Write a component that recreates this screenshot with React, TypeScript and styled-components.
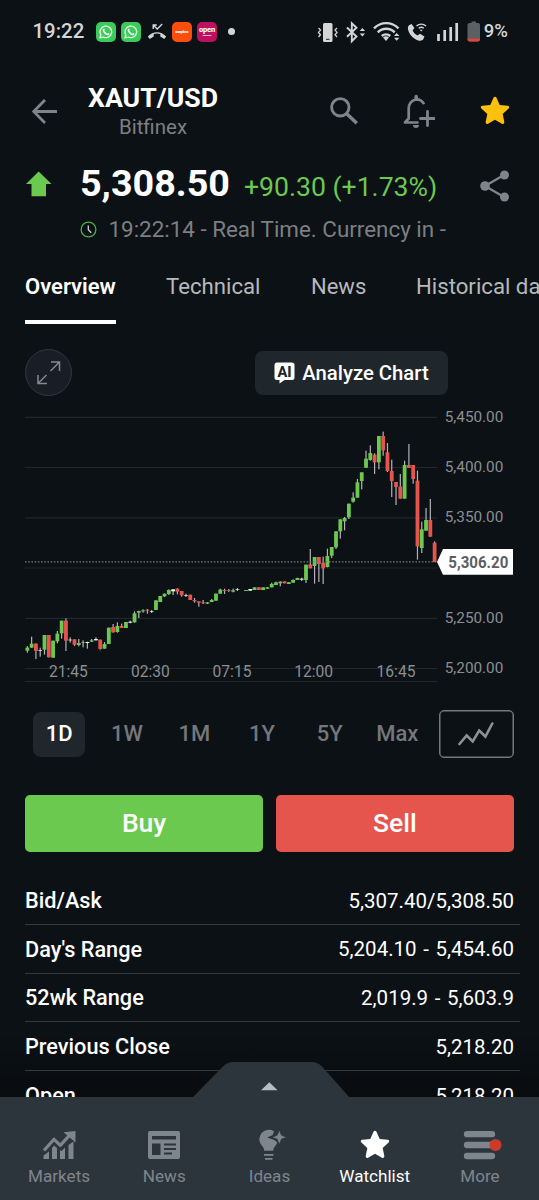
import React from 'react';
import styled, { createGlobalStyle } from 'styled-components';

const c = {
  bg: '#0c1115',
  panel: '#1f262c',
  nav: '#2d353c',
  muted: '#7c7f83',
  icon: '#80848a',
  green: '#6bc94f',
  red: '#e6544e',
  line: '#34393d',
};

const GlobalStyle = createGlobalStyle`
  * { box-sizing: border-box; }
  body { margin: 0; background: ${c.bg}; font-family: Roboto, "Liberation Sans", sans-serif; }
  svg { display: block; flex: none; }
`;

const Screen = styled.div`
  width: 539px;
  height: 1200px;
  display: flex;
  flex-direction: column;
  overflow: hidden;
  background: ${c.bg};
  color: #fff;
  white-space: nowrap;
`;

const Text = styled.span<{ $size: number; $weight?: number; $color?: string; $track?: number }>`
  font-size: ${(p) => p.$size}px;
  font-weight: ${(p) => p.$weight ?? 400};
  color: ${(p) => p.$color ?? '#fff'};
  letter-spacing: ${(p) => p.$track ?? 0}px;
  line-height: 1.2;
`;

/* ---------- status bar ---------- */

const StatusBar = styled.div`
  height: 63px;
  padding: 0 31px 0 32.500px;
  display: flex;
  align-items: center;
  flex: none;
`;

const NoticeIcons = styled.div`
  display: flex;
  align-items: center;
  gap: 5.200px;
  margin-left: 12px;
`;

const AppBadge = styled.div<{ $bg: string }>`
  width: 20px;
  height: 20px;
  border-radius: 5px;
  background: ${(p) => p.$bg};
  display: flex;
  flex-direction: column;
  align-items: center;
  justify-content: center;
`;

const BadgeText = styled.span<{ $size: number; $gap?: number }>`
  font-size: ${(p) => p.$size}px;
  font-weight: 800;
  line-height: 1;
  letter-spacing: -0.2px;
  margin-top: ${(p) => p.$gap ?? 0}px;
`;

const Dot = styled.i`
  width: 7px;
  height: 7px;
  border-radius: 50%;
  background: #d3d5d7;
  margin-left: 6px;
`;

const SystemIcons = styled.div`
  display: flex;
  align-items: center;
  gap: 4px;
  margin-left: auto;
`;

const WhatsApp = () => (
  <AppBadge $bg="#3ccb5a">
    <svg width="14" height="14" viewBox="0 0 14 14" fill="none" stroke="#e9fbe9">
      <path d="M1 13l.9-3.2A5.8 5.8 0 1 1 4.2 12z" strokeWidth="1.3" strokeLinejoin="round" />
      <path d="M4.9 4.3c-.6.6-.4 2 1 3.5s2.900 1.900 3.700 1.200" strokeWidth="1.7" strokeLinecap="round" />
    </svg>
  </AppBadge>
);

const MissedCall = () => (
  <svg width="20" height="20" viewBox="0 0 20 20" fill="none" stroke="#d3d5d7">
    <path d="M6.200 7V3h3.600M6.500 3.300l3.700 3.700 5-5" strokeWidth="1.400" />
    <path d="M.8 14.600c5.200-5.800 13.200-5.800 18.400 0l-1.900 2.300-4-2.400v-2.400a10 10 0 0 0-6.600 0v2.400L2.700 16.900z" fill="#d3d5d7" stroke="none" />
  </svg>
);

const StatusIcons = () => (
  <svg width="164" height="24" viewBox="316 19 164 24" fill="none" stroke="#d3d5d7">
    <rect x="323" y="22" width="9.500" height="19" rx="1.500" fill="#d3d5d7" stroke="none" />
    <path d="M326 38.300h3.500" stroke="#222" strokeWidth="1" />
    <path d="M318.500 27l2 2-2 2.400 2 2.300-2 2.300M337 27l-2 2 2 2.400-2 2.300 2 2.300" strokeWidth="1.300" />
    <path d="M347 26.500l9.500 9-4.700 4.700V22.200l4.700 4.600-9.500 9" strokeWidth="1.900" />
    <path d="M359.700 30l2.700-3 2.700 3zM359.700 32.500l2.700 3 2.700-3z" fill="#d3d5d7" stroke="none" />
    <path d="M374 27.300a17 17 0 0 1 24.500 0M377.800 31.300a12 12 0 0 1 16.900 0M381.800 35a6.500 6.500 0 0 1 8.500 0" strokeWidth="2.400" />
    <path d="M383 36.500a5 5 0 0 1 6 0l-3 3.500z" fill="#d3d5d7" stroke="none" />
    <path d="M394 35l2.700-3 2.700 3zM394 36.800l2.700 3 2.700-3z" fill="#d3d5d7" stroke="none" />
    <path d="M409 24.300l2.600-1.400 2.800 4.200-1.800 2.400c1 2.200 2.700 3.900 4.900 4.900l2.500-1.700 4.500 2.900-1.400 3c-1 1.200-3 1.500-5.500.6-4.500-1.700-8-5.400-9.300-9.700-.7-2.300-.4-4.200.7-5.200z" fill="#d3d5d7" stroke="none" />
    <path d="M416.500 25a7 7 0 0 1 9.500 0M418.700 27.300a4 4 0 0 1 5.100 0" strokeWidth="1.300" />
    <path d="M419.700 28.700h3l-1.500 1.800z" fill="#d3d5d7" stroke="none" />
    <path d="M438.500 40v-7M444.700 40v-11M450.700 40V26M456.700 40V22" strokeWidth="2.700" />
    <path d="M471.500 20.500h4.500v1.500h2a2 2 0 0 1 2 2v14a2.500 2.500 0 0 1-2.500 2.500h-7.500a2.500 2.500 0 0 1-2.500-2.500V24a2 2 0 0 1 2-2h2z" fill="#5d6063" stroke="none" />
    <path d="M467.500 37.700H480v.3a2.500 2.500 0 0 1-2.500 2.500H470a2.500 2.500 0 0 1-2.500-2.500z" fill="#e0443c" stroke="none" />
  </svg>
);

/* ---------- header ---------- */

const Header = styled.header`
  height: 83px;
  padding: 20px 29px 0 32px;
  display: flex;
  align-items: flex-start;
  flex: none;
`;

const BackSlot = styled.div`
  width: 56px;
  padding-top: 15.500px;
`;

const TitleBlock = styled.div`
  width: 130px;
  display: flex;
  flex-direction: column;
  align-items: center;
  & > span:first-child { line-height: 31px; }
  & > span:last-child { line-height: 27px; }
`;

const HeaderActions = styled.div`
  margin-left: auto;
  display: flex;
  align-items: center;
  padding-top: 11px;
  gap: 45px;
`;

/* ---------- quote ---------- */

const Quote = styled.section`
  height: 104px;
  padding: 15px 29px 0 25.500px;
  flex: none;
`;

const QuoteRow = styled.div`
  display: flex;
  align-items: center;
  height: 46px;
`;

const Price = styled(Text)`
  margin-left: 28.500px;
  width: 164px;
`;

const Change = styled(Text)`
  margin-top: 6px;
`;

const ShareSlot = styled.div`
  margin: 4px 0 0 auto;
`;

const TimeRow = styled.div`
  display: flex;
  align-items: center;
  height: 44px;
  gap: 12px;
  padding-left: 54px;
`;

/* ---------- tabs ---------- */

const Tabs = styled.nav`
  height: 74px;
  margin-left: 25px;
  display: flex;
  flex: none;
  overflow: hidden;
`;

const Tab = styled.div<{ $active?: boolean; $w: number }>`
  width: ${(p) => p.$w}px;
  flex: none;
  height: 74px;
  & > span { display: block; line-height: 73px; height: 70px; }
  &::after {
    content: '';
    display: block;
    width: 91px;
    height: 3.700px;
    background: ${(p) => (p.$active ? '#fff' : 'transparent')};
  }
`;

/* ---------- chart ---------- */

const ChartTools = styled.div`
  height: 81px;
  padding: 25px 91px 0 25px;
  display: flex;
  justify-content: space-between;
  align-items: flex-start;
  flex: none;
`;

const RoundButton = styled.div`
  width: 47px;
  height: 47px;
  border-radius: 50%;
  border: 1.500px solid #34383c;
  background: #191d25;
  display: flex;
  align-items: center;
  justify-content: center;
`;

const AnalyzeButton = styled.div`
  width: 193px;
  height: 44px;
  margin-top: 2px;
  border-radius: 8px;
  background: ${c.panel};
  display: flex;
  align-items: center;
  gap: 7px;
  padding-left: 19.300px;
`;

const ChartArea = styled.div`
  height: 289px;
  flex: none;
`;

type Bar = [kind: 'g' | 'r' | 'w', high: number, top: number, bottom: number, low: number];

/* Each session lists its bars in thirds of a pixel, measured from the session's base line. */
const sessions: { base: number; bars: Bar[] }[] = [
  {
    base: 1680,
    bars: [
      ['g', 258, 263, 272, 278], ['g', 230, 251, 263, 264], ['r', 250, 251, 273, 297], ['w', 263, 270, 272, 290],
      ['g', 225, 225, 269, 284], ['r', 225, 225, 292, 292], ['g', 242, 242, 293, 293], ['g', 213, 221, 244, 250],
      ['g', 182, 182, 220, 236], ['r', 175, 182, 242, 273], ['w', 232, 239, 241, 248], ['r', 238, 238, 254, 258],
      ['g', 237, 249, 255, 259], ['w', 241, 248, 249, 262], ['w', 245, 246, 249, 266], ['g', 237, 241, 245, 246],
      ['w', 232, 237, 241, 241], ['r', 239, 239, 267, 269], ['g', 246, 252, 266, 266], ['g', 203, 203, 252, 252],
      ['r', 192, 201, 217, 218], ['g', 187, 198, 216, 218], ['r', 191, 198, 204, 204], ['g', 186, 186, 204, 204],
      ['w', 182, 185, 188, 190], ['g', 154, 160, 187, 188], ['g', 152, 153, 158, 174], ['g', 148, 151, 154, 158],
      ['r', 147, 149, 152, 161], ['w', 150, 153, 155, 159], ['g', 121, 121, 150, 150], ['g', 108, 108, 126, 126],
      ['g', 101, 101, 109, 111], ['g', 88, 90, 102, 105], ['w', 87, 88, 94, 105], ['r', 85, 86, 95, 103],
    ],
  },
  {
    base: 1500,
    bars: [
      ['r', 273, 273, 286, 290], ['w', 281, 285, 287, 291], ['r', 284, 284, 300, 300], ['r', 294, 300, 304, 308],
      ['r', 304, 304, 308, 320], ['r', 300, 307, 310, 312], ['g', 306, 307, 311, 312], ['g', 297, 300, 306, 306],
      ['g', 281, 281, 302, 302], ['g', 266, 269, 281, 281], ['r', 266, 270, 273, 282], ['r', 267, 271, 273, 276],
      ['g', 266, 271, 275, 277], ['w', 264, 268, 270, 273], ['w', 271, 271, 271, 271], ['g', 270, 270, 273, 273],
      ['w', 267, 267, 272, 272], ['g', 262, 262, 270, 270], ['r', 262, 262, 270, 270], ['g', 262, 262, 270, 270],
      ['g', 261, 262, 266, 267], ['g', 248, 252, 262, 262], ['g', 245, 247, 255, 255], ['g', 244, 245, 250, 259],
      ['r', 244, 244, 250, 250], ['g', 246, 247, 252, 252], ['g', 238, 240, 248, 248], ['g', 233, 234, 240, 240],
      ['w', 233, 236, 239, 243], ['g', 194, 194, 240, 249], ['r', 147, 193, 205, 205], ['g', 171, 171, 198, 251],
      ['r', 171, 171, 192, 246], ['r', 170, 188, 205, 252], ['g', 146, 168, 201, 202], ['g', 141, 141, 167, 174],
      ['g', 94, 94, 142, 147], ['g', 58, 58, 94, 116], ['g', 51, 54, 64, 91], ['g', 11, 11, 52, 57],
    ],
  },
  {
    base: 1230,
    bars: [
      ['g', 247, 263, 275, 278], ['g', 207, 217, 263, 263], ['g', 187, 187, 213, 238], ['g', 122, 146, 173, 174],
      ['g', 106, 129, 150, 152], ['r', 130, 134, 157, 192], ['g', 78, 78, 157, 178], ['r', 65, 78, 121, 137],
      ['r', 99, 127, 183, 186], ['r', 149, 183, 213, 261], ['r', 216, 216, 231, 285], ['r', 192, 230, 266, 266],
      ['g', 152, 165, 266, 266], ['r', 102, 165, 174, 174], ['r', 165, 165, 207, 221], ['r', 182, 212, 409, 449],
      ['g', 335, 358, 414, 429], ['g', 294, 330, 362, 362], ['r', 267, 330, 380, 381], ['r', 394, 398, 456, 456],
    ],
  },
];

const bars = sessions.flatMap((s) =>
  s.bars.map(([kind, ...ys]) => ({ kind, ys: ys.map((y) => (y + s.base) / 3) })),
);
const fills = { g: c.green, r: c.red, w: '#f4f4f4' };
const grid = [417.3, 467.5, 517.8, 568, 618.3, 668.5, 681.5];
const priceLabels: [string, number][] = [
  ['5,450.00', 416.500], ['5,400.00', 466.500], ['5,350.00', 516.800], ['5,250.00', 617.500], ['5,200.00', 667.500],
];
const timeLabels: [string, number][] = [['21:45', 68.300], ['02:30', 150.300], ['07:15', 232], ['12:00', 313.700], ['16:45', 396]];

const Chart = () => (
  <svg width="539" height="289" viewBox="0 405 539 289" fontFamily='Roboto, "Liberation Sans", sans-serif'>
    {grid.map((y) => (
      <line key={y} x1="25" x2="437" y1={y} y2={y} stroke="#22272b" strokeWidth="1.200" />
    ))}
    {bars.map(({ kind, ys: [high, top, bottom, low] }, i) => {
      const x = 27.350 + i * 4.287;
      return (
        <g key={i}>
          <rect x={x - 0.600} y={high} width="1.200" height={low - high} fill="#b4b1b9" />
          <rect x={x - 1.900} y={top} width="3.800" height={bottom - top} fill={fills[kind]} />
        </g>
      );
    })}
    <line x1="25" x2="438" y1="561.900" y2="561.900" stroke="#777b7e" strokeWidth="1.200" strokeDasharray="1.600 1.600" />
    <path d="M437 562l6-13h70v25.700h-70z" fill="#fff" />
    <text x="478.300" y="568" fontSize="15.600" fontWeight="700" fill="#5b5f64" textAnchor="middle" textLength="60" lengthAdjust="spacingAndGlyphs">5,306.20</text>
    {priceLabels.map(([t, y]) => (
      <text key={t} x="444.700" y={y + 5.400} fontSize="15.300" fill="#8b8e92">{t}</text>
    ))}
    {timeLabels.map(([t, x]) => (
      <text key={t} x={x} y="676.500" fontSize="15.600" fill="#8b8e92" textAnchor="middle">{t}</text>
    ))}
  </svg>
);

/* ---------- range picker and trade buttons ---------- */

const RangeRow = styled.div`
  height: 79px;
  padding: 16px 25px 0 25px;
  display: flex;
  align-items: flex-start;
  flex: none;
`;

const RangeCell = styled.div`
  width: 67.600px;
  height: 48px;
  display: flex;
  align-items: center;
  justify-content: center;
`;

const RangePill = styled.div<{ $active?: boolean }>`
  width: 52px;
  height: 45px;
  padding: 1px 0 0 1px;
  border-radius: 8px;
  background: ${(p) => (p.$active ? c.panel : 'transparent')};
  display: flex;
  align-items: center;
  justify-content: center;
`;

const ChartTypeButton = styled.div`
  width: 75.500px;
  height: 48px;
  margin-left: auto;
  border: 1.500px solid #74787c;
  border-radius: 5px;
  display: flex;
  align-items: center;
  justify-content: center;
  box-shadow: inset 0 0 0 0.500px #74787c;
`;

const TradeRow = styled.div`
  display: flex;
  gap: 12.500px;
  padding: 22px 25px 0;
  height: 103px;
  flex: none;
`;

const TradeButton = styled.div<{ $bg: string }>`
  flex: 1;
  height: 57px;
  padding-bottom: 1px;
  border-radius: 5px;
  background: ${(p) => p.$bg};
  display: flex;
  align-items: center;
  justify-content: center;
`;

/* ---------- stats ---------- */

const Stats = styled.section`
  flex: 1;
  min-height: 0;
  overflow: hidden;
  padding: 0 19px 0 25px;
  background: linear-gradient(rgba(0, 0, 0, 0) 70%, rgba(0, 0, 0, 0.3));
`;

const StatRow = styled.div`
  height: 48.800px;
  padding: 2px 6px 0 0;
  border-bottom: 1.500px solid ${c.line};
  display: flex;
  align-items: center;
  justify-content: space-between;
  & > span:last-child { word-spacing: 1.500px; }
`;

/* ---------- bottom navigation ---------- */

const BottomNav = styled.nav`
  position: relative;
  height: 103px;
  padding: 0 6.500px;
  display: flex;
  flex: none;
  background: ${c.nav};
`;

const NavHandle = styled.div`
  position: absolute;
  left: 192px;
  top: -35px;
`;

const NavItem = styled.div`
  flex: 1;
  display: flex;
  flex-direction: column;
  align-items: center;
  padding-top: 32.500px;
  gap: 4px;
`;

const iconColor = '#7f858c';

const starPath = 'M15 .8c.7 0 1.200.4 1.500 1l3.200 7.100 8 .9c1.500.2 2 1.700.9 2.800l-5.900 5.500 1.600 8c.2 1.500-1.100 2.500-2.400 1.700L15 23.700l-6.900 4.100c-1.300.8-2.600-.2-2.400-1.700l1.600-8-5.900-5.500C.3 11.500.8 10 2.300 9.800l8-.9 3.200-7.100c.3-.6.8-1 1.500-1z';

const Star = ({ color, size = 30 }: { color: string; size?: number }) => (
  <svg width={size} height={size} viewBox="0 0 30 30"><path d={starPath} fill={color} /></svg>
);

const navItems = [
  {
    label: 'Markets',
    icon: (
      <svg width="34" height="30" viewBox="0 0 34 30" fill={iconColor}>
        <path d="M2 20.500L12 9.300l6.300 6L27 5.800" fill="none" stroke={iconColor} strokeWidth="3.200" strokeLinejoin="round" />
        <path d="M21.500 2.200L33.500 1v11.500z" />
        <path d="M1.500 25.500l5.500-4V29H1.500zM10 18l2-2.500 3 2.500v11h-5zM18 20l1.500 1 3.500-3.500V29h-5zM26.500 15l5-3.500V29h-5z" />
      </svg>
    ),
  },
  {
    label: 'News',
    icon: (
      <svg width="32" height="30" viewBox="0 0 32 30">
        <rect y="1" width="32" height="28" rx="2" fill={iconColor} />
        <path d="M4 6h24v3.500H4zM4 13.500h8.500V25H4zM16 13.500h12v2H16zM16 18h12v2H16zM16 22.500h8v2H16z" fill={c.nav} />
      </svg>
    ),
  },
  {
    label: 'Ideas',
    icon: (
      <svg width="32" height="32" viewBox="0 0 32 32" fill={iconColor}>
        <path d="M20 1.200A9.500 9.500 0 0 0 14.600-.2 9.300 9.300 0 0 0 5.300 9c0 3.400 1.800 5.600 3.300 7.500 1 1.300 1.500 2.500 1.600 4.300h9c.1-1.800.6-3 1.600-4.300 1.200-1.500 2-2.600 2.400-4.200l-3-2.300-7-2.400 5.500-2.500z" />
        <path d="M25.300.5l2 4.800 4.800 1.900-4.800 1.900-2 5-2-5-4.800-1.900 4.800-1.900z" stroke={c.nav} strokeWidth=".4" />
        <path d="M10 24h9.500v1.700H10zM11 28h7.500v1.700H11z" />
      </svg>
    ),
  },
  { label: 'Watchlist', active: true, icon: <Star color="#fff" size={30} /> },
  {
    label: 'More',
    icon: (
      <svg width="43" height="30" viewBox="-5.500 0 43 30">
        <path d="M3.500 4.200h25M3.500 15h25M3.500 26h25" stroke={iconColor} strokeWidth="6.300" strokeLinecap="round" />
        <circle cx="32" cy="15" r="6.100" fill="#cb3a2b" />
      </svg>
    ),
  },
];

const NavIcon = styled.div`
  height: 32px;
  display: flex;
  align-items: flex-start;
  justify-content: center;
  & > svg { overflow: visible; }
`;

const stats: [string, string][] = [
  ['Bid/Ask', '5,307.40/5,308.50'],
  ["Day's Range", '5,204.10 - 5,454.60'],
  ['52wk Range', '2,019.9 - 5,603.9'],
  ['Previous Close', '5,218.20'],
  ['Open', '5,218.20'],
];

export default function App() {
  return (
    <Screen>
      <GlobalStyle />
      <StatusBar>
        <Text $size={20.400} $color="#d3d5d7" $weight={500}>19:22</Text>
        <NoticeIcons>
          <WhatsApp />
          <WhatsApp />
          <MissedCall />
          <AppBadge $bg="#fb4e0c"><BadgeText $size={3.800}>soapbox</BadgeText></AppBadge>
          <AppBadge $bg="#bd1160">
            <BadgeText $size={7.500}>open</BadgeText>
            <BadgeText $size={2.500} $gap={2}>interpark</BadgeText>
          </AppBadge>
          <Dot />
        </NoticeIcons>
        <SystemIcons>
          <StatusIcons />
          <Text $size={18.500} $color="#d3d5d7" $weight={500}>9%</Text>
        </SystemIcons>
      </StatusBar>

      <Header>
        <BackSlot>
          <svg width="25" height="25" viewBox="0 0 25 25" fill="none" stroke={c.icon} strokeWidth="2.800">
            <path d="M25 12.500H2M13 .9L1.600 12.500 13 24" />
          </svg>
        </BackSlot>
        <TitleBlock>
          <Text $size={26.700} $weight={700}>XAUT/USD</Text>
          <Text $size={20.500} $color={c.muted}>Bitfinex</Text>
        </TitleBlock>
        <HeaderActions>
          <svg width="28" height="28" viewBox="0 0 28 28" fill="none" stroke={c.icon}>
            <circle cx="10.300" cy="10.300" r="8.700" strokeWidth="2.900" />
            <path d="M17 17l9.800 9.300" strokeWidth="3.500" />
          </svg>
          <svg width="32" height="34" viewBox="0 0 32 34" fill="none" stroke={c.icon} strokeWidth="2.700">
            <path d="M15.500 28.500H2l3.700-4v-10c0-4.500 3-8.600 7.800-9.200 3.600 0 6 1.700 7.500 4.800" strokeLinejoin="round" />
            <path d="M13.200 2.500v2.500" strokeWidth="3.500" strokeLinecap="round" />
            <path d="M24.500 17.500v14M17.500 24.500h14" strokeWidth="2.800" strokeLinecap="round" />
            <path d="M10 31h6a3 3 0 0 1-6 0z" fill={c.icon} stroke="none" />
          </svg>
          <Star color="#fcc00f" />
        </HeaderActions>
      </Header>

      <Quote>
        <QuoteRow>
          <svg width="26" height="26" viewBox="0 0 26 26" fill={c.green}>
            <path d="M12.700.5L25.500 13h-5.500v12.300H5.500V13H0z" />
          </svg>
          <Price $size={37.700} $weight={700}>5,308.50</Price>
          <Change $size={26.600} $color={c.green}>+90.30 (+1.73%)</Change>
          <ShareSlot>
            <svg width="30" height="32" viewBox="0 0 30 32" fill={c.icon} stroke={c.icon}>
              <path d="M24 5L5 16l19 11" fill="none" strokeWidth="2.300" />
              <circle cx="24.500" cy="5" r="4.500" stroke="none" />
              <circle cx="5" cy="16" r="4.800" stroke="none" />
              <circle cx="24.500" cy="27" r="4.500" stroke="none" />
            </svg>
          </ShareSlot>
        </QuoteRow>
        <TimeRow>
          <svg width="17" height="17" viewBox="0 0 17 17" fill="none">
            <circle cx="8.500" cy="8.500" r="7.400" stroke="#4fae43" strokeWidth="1.300" />
            <path d="M8.300 4.500v4.200l2.900 3" stroke="#d0d2d4" strokeWidth="1.300" />
          </svg>
          <Text $size={22.400} $color={c.muted}>19:22:14 - Real Time. Currency in -</Text>
        </TimeRow>
      </Quote>

      <Tabs>
        <Tab $active $w={141}><Text $size={22} $weight={600}>Overview</Text></Tab>
        <Tab $w={145}><Text $size={22.200} $color="#b7b9bb">Technical</Text></Tab>
        <Tab $w={105}><Text $size={22} $color="#b7b9bb">News</Text></Tab>
        <Tab $w={150}><Text $size={22.200} $color="#b7b9bb">Historical data</Text></Tab>
      </Tabs>

      <ChartTools>
        <RoundButton>
          <svg width="24" height="24" viewBox="0 0 24 24" fill="none" stroke="#85888c" strokeWidth="1.500">
            <path d="M14 1h8.500v9M22 1.500l-8.500 8.500M1 14v8.500h9M1.500 22l8-8" />
          </svg>
        </RoundButton>
        <AnalyzeButton>
          <svg width="21" height="22" viewBox="0 0 21 22">
            <path d="M3 .5h15a2.500 2.500 0 0 1 2.500 2.500v12.500a2.500 2.500 0 0 1-2.500 2.500h-7.500L5.500 21.500V18H3A2.500 2.500 0 0 1 .5 15.500V3A2.500 2.500 0 0 1 3 .5z" fill="#fff" />
            <text x="10.500" y="14.500" textAnchor="middle" fontFamily="Roboto, sans-serif" fontSize="14.500" fontWeight="800" fill={c.panel}>AI</text>
          </svg>
          <Text $size={20.300} $weight={500}>Analyze Chart</Text>
        </AnalyzeButton>
      </ChartTools>
      <ChartArea><Chart /></ChartArea>

      <RangeRow>
        {['1D', '1W', '1M', '1Y', '5Y', 'Max'].map((r, i) => (
          <RangeCell key={r}>
            <RangePill $active={i === 0}>
              <Text $size={22} $weight={500} $color={i === 0 ? '#fff' : '#74777b'}>{r}</Text>
            </RangePill>
          </RangeCell>
        ))}
        <ChartTypeButton>
          <svg width="36" height="24" viewBox="0 0 36 24" fill="none" stroke="#8e9194" strokeWidth="2.600">
            <path d="M1.500 22l7.200-8.500 6 6 6.500-11 6.200 6L34.300 1.500" strokeLinecap="round" />
          </svg>
        </ChartTypeButton>
      </RangeRow>
      <TradeRow>
        <TradeButton $bg={c.green}><Text $size={26.500} $weight={500}>Buy</Text></TradeButton>
        <TradeButton $bg={c.red}><Text $size={26.500} $weight={500}>Sell</Text></TradeButton>
      </TradeRow>

      <Stats>
        {stats.map(([k, v]) => (
          <StatRow key={k}>
            <Text $size={21.700} $weight={500}>{k}</Text>
            <Text $size={20.500}>{v}</Text>
          </StatRow>
        ))}
      </Stats>

      <BottomNav>
        <NavHandle>
          <svg width="158" height="36" viewBox="192 1062 158 36">
            <path d="M192 1098l31-31.500c3-3 6-4.500 10-4.500h79c4 0 7 1.500 10 4.500l28 31.500z" fill={c.nav} />
            <path d="M261 1090.300l8.300-8 8.300 8z" fill="#b9bcc0" />
          </svg>
        </NavHandle>
        {navItems.map((n) => (
          <NavItem key={n.label}>
            <NavIcon>{n.icon}</NavIcon>
            <Text $size={17.100} $color={n.active ? '#fff' : iconColor}>{n.label}</Text>
          </NavItem>
        ))}
      </BottomNav>
    </Screen>
  );
}
